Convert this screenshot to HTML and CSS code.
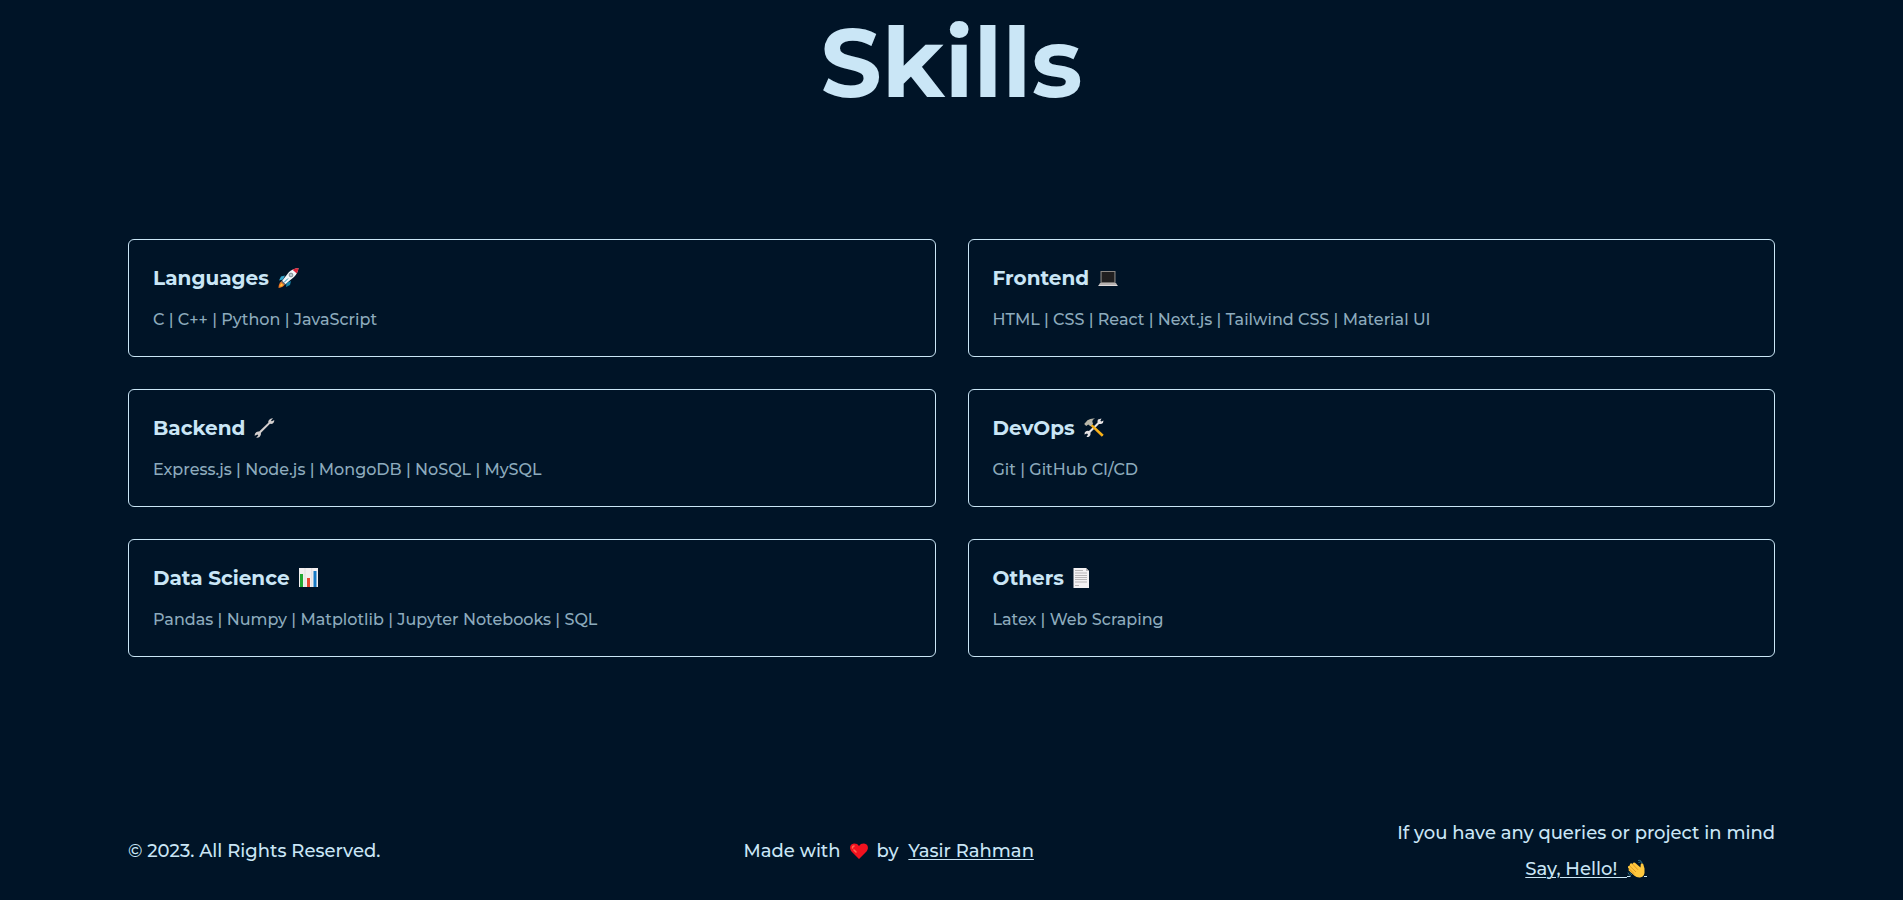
FILE: index.html
```html
<!DOCTYPE html>
<html lang="en">
<head>
<meta charset="utf-8">
<meta name="viewport" content="width=device-width, initial-scale=1">
<title>Skills</title>
<link rel="stylesheet" href="styles.css">
</head>
<body>
<main class="skills">
  <h2 class="title">Skills</h2>
  <div class="grid">
    <article class="card">
      <h3 class="card-title">Languages
        <svg class="icon" viewBox="0 0 22 22" aria-hidden="true"><path d="M8 8.500L4 9.500L2 13.500L6 12.500Z" fill="#35a8cd"/><path d="M14 14L13 18L9 20L9.500 16Z" fill="#1688ad"/><path d="M5 14L8 17Q6.500 20.500 1.500 21Q1.500 16 5 14Z" fill="#ef7b24"/><path d="M4.500 16.500L6 18Q4.500 19.500 3 19.500Q3 18 4.500 16.500Z" fill="#ffc83d"/><path d="M5 14L12 5Q16 1.500 21.500 1Q21 6 17 10L8 17.500Z" fill="#f3f7f9"/><path d="M15.500 2.800Q18.200 1.200 21.500 1Q21.200 4 19.800 6.500Z" fill="#dc2338"/><circle cx="14" cy="8" r="1.900" fill="#b9c9cf" stroke="#66757b" stroke-width=".8"/><path d="M7 15.500L11 11.500" stroke="#1c94b8" stroke-width="1"/><path d="M4.500 14L8 17.500" stroke="#65686b" stroke-width="1.500"/></svg>
      </h3>
      <p class="card-text">C | C++ | Python | JavaScript</p>
    </article>
    <article class="card">
      <h3 class="card-title">Frontend
        <svg class="icon" viewBox="0 0 22 22" aria-hidden="true"><path d="M3.500 4H18.500V16H3.500Z" fill="#8b8784"/><path d="M4.600 5H17.400V15.200H4.600Z" fill="#201f20"/><path d="M3 16H19L20.500 18.500H1.500Z" fill="#b8b3b1"/><path d="M1.500 18H20.500V19H1.500Z" fill="#dedada"/></svg>
      </h3>
      <p class="card-text">HTML | CSS | React | Next.js | Tailwind CSS | Material UI</p>
    </article>
    <article class="card">
      <h3 class="card-title">Backend
        <svg class="icon" viewBox="0 0 22 22" aria-hidden="true"><path d="M16 3Q17.500 1 20 1.200L18 3.500L18.800 4.300L21.300 3Q21.500 5.500 19.800 6.600Q18.500 7.200 17 6.800L8 15.700Q8.300 18.500 6.500 20Q5 21 3.200 20.700L5.300 18.500L4.500 17.600L1.700 18.700Q1.500 16.500 3.200 15.200Q4.500 14.300 6.200 14.600L15.300 5.700Q15 4.200 16 3Z" fill="#d3cfce"/></svg>
      </h3>
      <p class="card-text">Express.js | Node.js | MongoDB | NoSQL | MySQL</p>
    </article>
    <article class="card">
      <h3 class="card-title">DevOps
        <svg class="icon" viewBox="0 0 22 22" aria-hidden="true"><path d="M15 2.500L18.500 1.500L17.400 3.800L18.300 4.600L20.500 3.500Q20.500 6 18.700 6.800Q17.300 7.300 16 7L7.500 15.500Q8 18 6.300 19.500Q5 20.300 3.500 20L5 17.600L4 16.600L1.500 17.500Q1.300 15.200 3 14.200Q4.500 13.400 6 14L14.600 5.500Q14.200 4 15 2.500Z" fill="#e5e2e3"/><path d="M9 7L20.700 17.700L18.800 19.800L7.300 8.700Z" fill="#f2aa20"/><path d="M9 8L19.800 18.700" stroke="#ffc000" stroke-width=".8"/><path d="M1.200 7L4.500 3.200Q8 1 12 1.600Q9.200 2.600 9.300 4.400L10 6.700L7.500 9.200L5.200 7.500L3.200 9.100Z" fill="#b9b7a9"/></svg>
      </h3>
      <p class="card-text">Git | GitHub CI/CD</p>
    </article>
    <article class="card">
      <h3 class="card-title">Data Science
        <svg class="icon" viewBox="0 0 22 22" aria-hidden="true"><path d="M1 1H20V20H1Z" fill="#f3eff0"/><path d="M2 7H5V20H2Z" fill="#24a834"/><path d="M9 11H12V20H9Z" fill="#e84830"/><path d="M15.500 4H18.500V20H15.500Z" fill="#1679c4"/><path d="M7 1V20M13.700 1V20" stroke="#d7d3d4" stroke-width=".6"/></svg>
      </h3>
      <p class="card-text">Pandas | Numpy | Matplotlib | Jupyter Notebooks | SQL</p>
    </article>
    <article class="card">
      <h3 class="card-title">Others
        <svg class="icon" viewBox="0 0 22 22" aria-hidden="true"><path d="M1.500 1H14L17 4V21H1.500Z" fill="#f4f2f3"/><path d="M14 1V4H17Z" fill="#bdb9ba"/><path d="M3 3.500H11M3 6H15M3 8.500H15M3 10.500H15M3 12.500H15M3 15H15M3 18.500H7" stroke="#aaa6a7" stroke-width=".8"/></svg>
      </h3>
      <p class="card-text">Latex | Web Scraping</p>
    </article>
  </div>
</main>
<footer class="footer">
  <p class="line">© 2023. All Rights Reserved.</p>
  <p class="line made">Made with
    <svg class="icon-small" viewBox="0 0 20 20" aria-hidden="true"><path d="M10 18L2.500 10.500C-.3 7 1.300 2.800 5 2.600Q8.500 2.500 10 5Q11.500 2.500 15 2.600C18.700 2.800 20.300 7 17.500 10.500Z" fill="#f2121f"/><path d="M3.500 7Q3.500 5.200 5 5M5 9L7 11" fill="none" stroke="#ff6a52" stroke-width="1.600" stroke-linecap="round"/></svg>
    <span>by &nbsp;<a class="link" href="#author">Yasir Rahman</a></span></p>
  <div class="contact">
    <p class="line">If you have any queries or project in mind</p>
    <a class="link line" href="#contact">Say, Hello!&nbsp; <svg class="icon-small" viewBox="0 0 20 20" aria-hidden="true"><path d="M0 17.500H3.500M17 17.500H20" stroke="#cae6f6"/><path d="M1 9Q.5 6.500 2.700 6.800L3 5Q4 3.700 5.500 5Q6 2.700 8 3.700L13.500 8.500L13.700 5.500Q14.600 3.500 16.200 5L17.500 9.500V14Q16.800 18 13 18.500Q9.500 18.700 7.500 16.700L1.700 11.500Q1 10 2.300 10Z" fill="#ffc83d"/><path d="M2.700 7L9 13M5.500 5L11 10.800M2.300 10L7.500 15" stroke="#d98c1f" stroke-width=".8"/><path d="M11 1.500Q13 .8 14.500 2.500M11.500 3.500Q14 2 15.500 4M1 13.500Q1.500 16 4 17M3 13.300Q3 15 5 15.800" fill="none" stroke="#2b6f87" stroke-width=".9"/></svg></a>
  </div>
</footer>
</body>
</html>
```
FILE: styles.css
```css
* {
  box-sizing: border-box;
}

body {
  margin: 0;
  background: #001427;
  color: #cae6f6;
  font-family: Montserrat, Inter, "Open Sans", sans-serif;
  font-weight: 500;
}

h2,
h3,
p {
  margin: 0;
}

.skills {
  padding: 15px 128px 0;
}

.title {
  margin-bottom: 128px;
  font-size: 96px;
  line-height: 96px;
  font-weight: 700;
  text-align: center;
}

.grid {
  display: grid;
  grid-template-columns: 1fr 1fr;
  gap: 32px;
}

.card {
  padding: 24px;
  border: 1px solid #cae6f6;
  border-radius: 6px;
}

.card-title {
  display: flex;
  align-items: center;
  gap: 8px;
  margin-bottom: 16px;
  font-size: 20px;
  line-height: 28px;
  font-weight: 700;
}

.icon {
  width: 22px;
  height: 22px;
}

.card-text {
  color: #8dabbd;
  font-size: 16px;
  line-height: 24px;
}

.footer {
  display: flex;
  align-items: center;
  justify-content: space-between;
  padding: 158px 128px 12px;
  font-size: 18px;
}

.line {
  line-height: 36px;
}

.made {
  display: flex;
  align-items: center;
  gap: 8px;
}

.contact {
  text-align: center;
}

.link {
  color: inherit;
  text-decoration-thickness: 1px;
  text-underline-offset: 2px;
}

.icon-small {
  width: 20px;
  height: 20px;
  vertical-align: -4px;
}
```
